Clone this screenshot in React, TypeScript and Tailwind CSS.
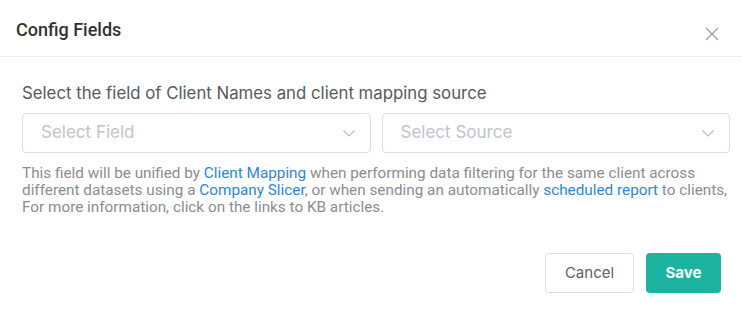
import React from "react";

function Chevron() {
  return (
    <svg width="14" height="14" viewBox="0 0 14 14" fill="none">
      <path d="M1.5 4.5 L7 10 L12.5 4.5" stroke="#b8bcc4" strokeWidth="1.1" />
    </svg>
  );
}

function SelectBox({ label }: { label: string }) {
  return (
    <div className="flex h-[40px] flex-1 items-center justify-between rounded-[4px] border border-[#dcdfe6] pl-[18px] pr-[14px]">
      <span className="text-[17px] text-[#c0c4cc]" style={{ fontFamily: "Inter, sans-serif" }}>
        {label}
      </span>
      <Chevron />
    </div>
  );
}

export default function App() {
  return (
    <div className="h-[314px] w-[742px] bg-white" style={{ fontFamily: "Inter, sans-serif" }}>
      <div className="flex h-[57px] items-center justify-between border-b border-[#ebeef5] pl-[16px] pr-[23px] pt-[2px]">
        <span className="text-[18px] font-medium text-[#303133]" style={{ fontFamily: "Roboto, sans-serif" }}>
          Config Fields
        </span>
        <svg width="14" height="14" viewBox="0 0 14 14" className="mt-[10px]">
          <path d="M1 1 L13 13 M13 1 L1 13" stroke="#9a9da3" strokeWidth="1.2" />
        </svg>
      </div>
      <div className="pl-[22px] pr-[12px] pt-[24px]">
        <div className="text-[16.8px] leading-[24px] text-[#555a61]">
          Select the field of Client Names and client mapping source
        </div>
        <div className="mt-[8px] flex gap-[11px]">
          <SelectBox label="Select Field" />
          <SelectBox label="Select Source" />
        </div>
        <div
          className="mt-[12px] text-[15.3px] leading-[17px] text-[#8a8d93]"
          style={{ fontFamily: "Roboto, sans-serif" }}
        >
          This field will be unified by <span className="text-[#2d87d9]">Client Mapping</span> when performing data
          filtering for the same client across different datasets using a{" "}
          <span className="text-[#2d87d9]">Company Slicer</span>, or when sending an automatically{" "}
          <span className="text-[#2d87d9]">scheduled report</span> to clients, For more information, click on the
          links to KB articles.
        </div>
      </div>
      <div className="mt-[37px] flex justify-end gap-[12px] pr-[21px]">
        <button className="h-[40px] w-[89px] rounded-[4px] border border-[#dcdfe6] bg-white text-[15px] text-[#606266]">
          Cancel
        </button>
        <button className="h-[40px] w-[75px] rounded-[4px] bg-[#1bb39f] text-[15px] font-bold text-white">
          Save
        </button>
      </div>
    </div>
  );
}
